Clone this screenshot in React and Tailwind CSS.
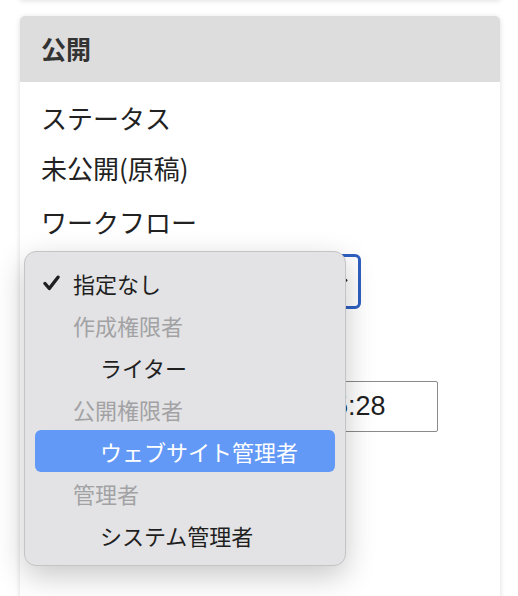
const jp = { fontFamily: '"Noto Sans CJK JP", "Noto Sans", sans-serif' };

const options = [
  { label: "指定なし", type: "item", checked: true, indent: false },
  { label: "作成権限者", type: "group" },
  { label: "ライター", type: "item", indent: true },
  { label: "公開権限者", type: "group" },
  { label: "ウェブサイト管理者", type: "item", indent: true, active: true },
  { label: "管理者", type: "group" },
  { label: "システム管理者", type: "item", indent: true },
];

function Check() {
  return (
    <svg width="17" height="16" viewBox="0 0 17 16" className="absolute left-[8px] top-1/2 -translate-y-1/2">
      <path d="M2 8.5 L6.3 13.5 L15 2.2" fill="none" stroke="#1f1f1f" strokeWidth="3.4" strokeLinecap="round" strokeLinejoin="round" />
    </svg>
  );
}

function Dropdown() {
  return (
    <div
      className="absolute left-[24px] top-[251px] w-[322px] h-[315px] rounded-[12px] border border-[#c4c4c6] bg-[#e3e3e5] pt-[10px] shadow-[0_10px_30px_rgba(0,0,0,0.22)]"
      style={jp}
    >
      {options.map((o) => (
        <div
          key={o.label}
          className={`relative mx-[10px] h-[42px] flex items-center rounded-[6px] text-[22px] ${
            o.active ? "bg-[#6299f6] text-white" : o.type === "group" ? "text-[#a2a2a4]" : "text-[#1f1f1f]"
          } ${o.indent ? "pl-[65px]" : "pl-[38px]"}`}
        >
          {o.checked && <Check />}
          {o.label}
        </div>
      ))}
    </div>
  );
}

const mono = { fontFamily: '"Liberation Sans", Arial, sans-serif' };

export default function App() {
  return (
    <div className="relative w-[518px] h-[596px] overflow-hidden bg-white" style={jp}>
      {/* previous card's bottom edge */}
      <div className="ml-[20px] w-[480px] h-[8px] -mt-[8px] bg-white shadow-[0_1px_5px_rgba(0,0,0,0.12)]" />

      <div className="ml-[20px] mt-[16px] w-[480px] h-[640px] rounded-[5px] bg-white shadow-[0_1px_5px_rgba(0,0,0,0.15)] overflow-hidden">
        <div className="h-[66px] bg-[#dddddd] px-[21px] flex items-center">
          <span className="text-[25px] font-bold text-[#333333]">公開</span>
        </div>

        <div className="px-[21px] pt-[18px] text-[#222222]">
          <div className="text-[26px] leading-[36px]">ステータス</div>
          <div className="text-[26px] leading-[36px] mt-[14px]">未公開(原稿)</div>

          <div className="text-[26px] leading-[36px] mt-[18px]">ワークフロー</div>
          <div className="mt-[14px] w-[320px] h-[55px] rounded-[6px] border-[3px] border-[#2f5fc0] flex items-center justify-between pl-[12px] pr-[10px]">
            <span className="text-[22px]">指定なし</span>
            <svg width="9" height="7" viewBox="0 0 9 7">
              <path d="M1 1.5 L4.5 5.5 L8 1.5" fill="none" stroke="#222" strokeWidth="2" />
            </svg>
          </div>

          <div className="text-[26px] leading-[36px] mt-[16px]">公開日時</div>
          <div className="mt-[20px] flex gap-[10px]">
            <div
              className="w-[249px] h-[51px] rounded-[2px] border border-[#8a8a8a] flex items-center pl-[12px] text-[26px] text-[#1f1f1f]"
              style={mono}
            >
              2024/04/01
            </div>
            <div
              className="w-[138px] h-[51px] rounded-[2px] border border-[#8a8a8a] flex items-center pl-[17px] text-[27px] text-[#1f1f1f]"
              style={mono}
            >
              15:28
            </div>
          </div>
        </div>
      </div>

      <Dropdown />
    </div>
  );
}
